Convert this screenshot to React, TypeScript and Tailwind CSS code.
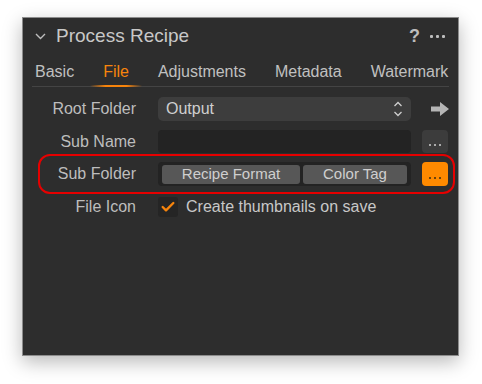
import { Check } from "lucide-react"

const tabs = ["Basic", "File", "Adjustments", "Metadata", "Watermark"]

function Dots({ className }: { className: string }) {
  return (
    <div className={"flex gap-[3px] " + className}>
      <span className="block h-[3px] w-[3px] rounded-[1px] bg-current" />
      <span className="block h-[3px] w-[3px] rounded-[1px] bg-current" />
      <span className="block h-[3px] w-[3px] rounded-[1px] bg-current" />
    </div>
  )
}

function Label({ children }: { children: string }) {
  return <div className="w-[113px] shrink-0 text-right text-[16px] text-[#bdbdbd]">{children}</div>
}

export default function App() {
  return (
    <div className="h-[384px] w-[482px] bg-white pl-[22px] pt-[17px]" style={{ fontFamily: "'Liberation Sans', Arial, sans-serif" }}>
      <div className="relative h-[339px] w-[437px] border border-[#8c8c8c] bg-[#2d2d2d] shadow-[0_6px_18px_rgba(0,0,0,0.28)]">
        {/* header */}
        <div className="flex h-[36px] items-center pl-[12px] pr-[13px]">
          <svg width="11" height="7" viewBox="0 0 11 7" className="mt-[1px]">
            <path d="M1 1l4.5 4.5L10 1" fill="none" stroke="#bdbdbd" strokeWidth="1.4" />
          </svg>
          <div className="ml-[10px] text-[19px] text-[#c8c8c8]">Process Recipe</div>
          <div className="ml-auto text-[18px] font-bold text-[#bdbdbd]">?</div>
          <Dots className="ml-[10px] text-[#bdbdbd]" />
        </div>

        {/* tabs */}
        <div className="mt-[6px] flex items-center gap-[29px] pl-[12px] text-[16px] text-[#c0c0c0]">
          {tabs.map((t) => (
            <div key={t} className={t === "File" ? "relative text-[#f7840c]" : ""}>
              {t}
              {t === "File" && (
                <div className="absolute -bottom-[3px] -left-[13px] -right-[13px] h-[2px] bg-[linear-gradient(90deg,transparent,#f7840c_30%,#f7840c_70%,transparent)]" />
              )}
            </div>
          ))}
        </div>
        <div className="mx-[9px] mt-[2px] h-[1px] bg-[#444]" />

        {/* form */}
        <div className="mt-[10px] flex flex-col">
          <div className="flex h-[24px] items-center gap-[22px]">
            <Label>Root Folder</Label>
            <div className="flex h-[24px] w-[253px] items-center rounded-[5px] bg-[#3d3d3d] pl-[8px] pr-[8px] text-[16px] text-[#cfcfcf]">
              Output
              <svg width="10" height="16" viewBox="0 0 10 16" className="ml-auto">
                <path d="M1.5 5L5 1.5 8.5 5M1.5 11L5 14.5 8.5 11" fill="none" stroke="#cfcfcf" strokeWidth="1.3" />
              </svg>
            </div>
            <svg width="18" height="14" viewBox="0 0 18 14" className="ml-[-2px]">
              <path d="M0 4.5h9V0l9 7-9 7V9.5H0z" fill="#b5b5b5" />
            </svg>
          </div>

          <div className="mt-[9px] flex h-[23px] items-center gap-[22px]">
            <Label>Sub Name</Label>
            <div className="h-[23px] w-[253px] rounded-[4px] bg-[#232323]" />
            <div className="ml-[-11px] flex h-[23px] w-[26px] items-end justify-center rounded-[4px] bg-[#3c3c3c] pb-[7px]">
              <Dots className="gap-[2px] text-[#cfcfcf] [&>span]:h-[2px] [&>span]:w-[2px]" />
            </div>
          </div>

          <div className="relative mt-[9px] flex h-[24px] items-center gap-[22px]">
            <Label>Sub Folder</Label>
            <div className="flex h-[24px] w-[253px] items-center gap-[3px] rounded-[4px] bg-[#232323] px-[4px]">
              <div className="flex h-[19px] w-[138px] items-center justify-center rounded-[3px] bg-[#575757] text-[15px] text-[#cfcfcf]">Recipe Format</div>
              <div className="flex h-[19px] w-[104px] items-center justify-center rounded-[3px] bg-[#575757] text-[15px] text-[#cfcfcf]">Color Tag</div>
            </div>
            <div className="ml-[-11px] flex h-[24px] w-[26px] items-end justify-center rounded-[4px] bg-[#ff8a00] pb-[7px]">
              <Dots className="gap-[2px] text-[#3a2a10] [&>span]:h-[2px] [&>span]:w-[2px]" />
            </div>
            <div className="pointer-events-none absolute -top-[8px] left-[15px] h-[40px] w-[417px] rounded-[12px] border-2 border-[#e60000]" />
          </div>

          <div className="mt-[11px] flex h-[20px] items-center gap-[22px]">
            <Label>File Icon</Label>
            <div className="flex items-center gap-[8px]">
              <div className="flex h-[20px] w-[20px] items-center justify-center rounded-[3px] bg-[#252525]">
                <Check size={16} strokeWidth={3.5} color="#f7840c" />
              </div>
              <span className="text-[16px] text-[#c8c8c8]">Create thumbnails on save</span>
            </div>
          </div>
        </div>
      </div>
    </div>
  )
}
